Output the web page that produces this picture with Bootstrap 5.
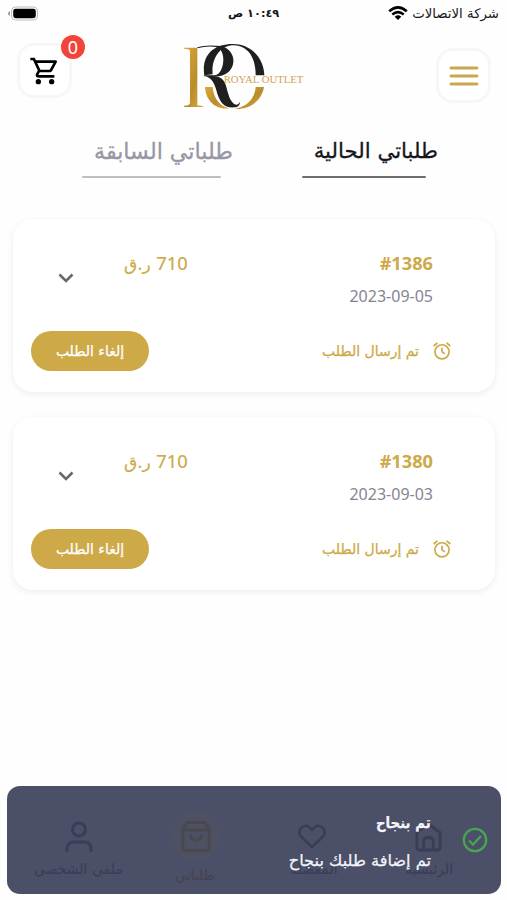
<!DOCTYPE html>
<html lang="ar" dir="rtl">
<head>
<meta charset="utf-8">
<meta name="viewport" content="width=device-width, initial-scale=1">
<title>طلباتي</title>
<link href="https://cdn.jsdelivr.net/npm/bootstrap@5.3.0/dist/css/bootstrap.min.css" rel="stylesheet">
<style>
body{font-family:"DejaVu Sans","Noto Sans",sans-serif;background:#fefefe;color:#16161a;height:900px;overflow:hidden}
.latin{font-family:"Noto Sans","DejaVu Sans",sans-serif}
svg{display:block;flex:none}
.txt{white-space:nowrap;line-height:1}
.status{height:27px;font-size:13.3px;direction:ltr}
.clock{font-size:11.3px;padding-left:80px}
.app-head{height:93px;direction:ltr;padding:8px 16px 0 17px}
.tile{width:55px;height:55px;border:3px solid #f7f7f7;border-radius:17px;background:#fff}
.count{width:24px;height:24px;top:-11px;left:41px;background:#f4433a;font-size:18px;line-height:24px}
.tabs{height:99px;direction:ltr;padding:18px 81px 0 82px}
.tab-item{font-size:22.2px;margin-right:-12px;height:38px;padding-top:2px;-webkit-text-stroke:.3px currentColor}
.tab-item.now{font-size:21.3px}
.tab-line{height:2px;border-radius:1px}
.order{height:173px;border-radius:20px;margin:0 12px 25px 13px;background:#fff;box-shadow:0 2px 7px rgba(0,0,0,.07);direction:ltr;padding:35px 43px 0 18px}
.gold{color:#cda947}
.cancel{width:118px;height:40px;background:#cda947!important;color:#fff!important;font-size:14px;-webkit-text-stroke:.25px #fff}
.price{font-size:17px;margin-left:47px;-webkit-text-stroke:.2px currentColor}
.price .latin{font-size:18.3px}
.order-no{font-size:18.2px}
.date{font-size:16px;color:#858591;margin-top:16px}
.foot{margin-top:27px}
.sent{font-size:14px;margin-right:13px;-webkit-text-stroke:.25px currentColor}
.note{left:7px;top:786px;width:494px;height:108px;border-radius:13px;background:#4b4f68;direction:ltr}
.dock-item{position:absolute;color:#393d56}
.dock-label{font-size:14px}
.spot{width:48px;height:48px;border-radius:17px;background:#4e5163}
.msg{position:absolute;right:70px;color:#f4f4fa;-webkit-text-stroke:.25px currentColor}
</style>
</head>
<body>
<header>
<div class="status d-flex justify-content-between align-items-center px-2">
<svg width="31" height="15" viewBox="0 0 31 15"><rect x="3.5" y="1" width="26" height="13" rx="4" fill="#fff" stroke="#bcbcbc"/><rect x="5.2" y="2.8" width="22.6" height="9.4" rx="2.4" fill="#000"/><path d="M2 5v5Q0 9 0 7.500T2 5" fill="#999"/></svg>
<div class="txt fw-bold clock" dir="rtl">١٠:٤٩ ص</div>
<div class="d-flex align-items-center gap-1"><svg width="20" height="15" viewBox="0 0 20 15" fill="none" stroke="#000" stroke-width="2.5"><path d="M1.200 5.300Q10-2.500 18.800 5.300M4.300 8.500Q10 3.800 15.700 8.500"/><path d="M6.700 10.700Q10 8 13.300 10.700L10 14Z" fill="#000" stroke="none"/></svg><span class="txt" dir="rtl">شركة الاتصالات</span></div>
</div>
<div class="app-head d-flex justify-content-between">
<div class="tile position-relative mt-2 d-flex align-items-center justify-content-center"><svg width="32" height="32" viewBox="0 0 24 24"><path d="M15.550 13c.750 0 1.410-.410 1.750-1.030l3.580-6.490A.996.996 0 0 0 20.010 4H5.210l-.940-2H1v2h2l3.600 7.590-1.350 2.440C4.520 15.370 5.480 17 7 17h12v-2H7l1.100-2h7.450zM6.160 6h12.150l-2.760 5H8.530L6.160 6zM7 18a2 2 0 1 0 0 4 2 2 0 0 0 0-4zm10 0a2 2 0 1 0 0 4 2 2 0 0 0 0-4z"/></svg><span class="count latin position-absolute rounded-circle text-white text-center">0</span></div>
<svg width="140" height="80" viewBox="0 0 420 240" style="margin:1px 18px 0 0">
<defs><linearGradient id="au" x1="0" x2="1" y1="0" y2="1"><stop stop-color="#dca93b"/><stop offset=".55" stop-color="#b98d2b"/><stop offset="1" stop-color="#dfac3c"/></linearGradient></defs>
<path d="M27 35H67V208Q80 209 88 213H27V209Q45 209 45 200V44Q43 38 27 38Z" fill="url(#au)"/>
<path d="M67 34Q92 25 137 30C190 42 188 112 132 121H87V118H120C150 112 155 40 124 33Q96 29 67 37Z" fill="#201f20"/>
<path d="M88 118C78 55 119 23 175 24C229 24 267 68 268 118H242C242 65 220 30 177 28C138 27 108 65 113 115Z" fill="#201f20"/>
<path d="M110 119C151 120 152 146 160 174C168 204 187 216 195 197C195 207 189 214 178 214C146 216 135 197 127 173C119 143 112 127 92 121Z" fill="#201f20"/>
<path d="M90 153H113C116 192 138 211 163 217C119 223 91 189 90 153Z" fill="url(#au)"/>
<path d="M242 153H267C261 190 230 221 178 219C216 213 240 187 242 153Z" fill="url(#au)"/>
<text x="146" y="142" textLength="239" lengthAdjust="spacingAndGlyphs" font-family="Liberation Serif,serif" font-size="30" fill="#cfa354">ROYAL OUTLET</text></svg>
<div class="tile d-flex align-items-center justify-content-center" style="margin-top:13px"><svg width="30" height="22" viewBox="0 0 30 22" stroke="#cda74c" stroke-width="2.800" stroke-linecap="round"><path d="M2 3H28M2 11H28M2 19H28"/></svg></div>
</div>
</header>
<nav class="tabs d-flex justify-content-between">
<div style="width:139px"><div class="tab-item txt" dir="rtl" style="color:#9797a4">طلباتي السابقة</div><div class="tab-line" style="background:#bfbfc1"></div></div>
<div style="width:124px"><div class="tab-item now txt" dir="rtl">طلباتي الحالية</div><div class="tab-line" style="background:#6e6e70"></div></div>
</nav>
<main>
<article class="order">
<div class="d-flex">
<svg class="ms-4" style="margin-top:13px" width="22" height="22" viewBox="0 0 22 22" fill="none" stroke="#66666b" stroke-width="2.500"><path d="M4.500 7.500L11 14L17.500 7.500"/></svg>
<div class="gold txt price" dir="rtl"><span class="latin">710</span> ر.ق</div>
<div class="ms-auto text-end latin" style="padding-right:19px"><div class="gold txt fw-bold order-no">#1386</div><div class="txt date">2023-09-05</div></div>
</div>
<div class="d-flex align-items-center justify-content-between foot">
<button class="btn cancel rounded-pill p-0 txt border-0">إلغاء الطلب</button>
<div class="d-flex align-items-center"><span class="txt gold sent" dir="rtl">تم إرسال الطلب</span><svg width="20" height="20" viewBox="0 0 24 24" fill="none" stroke="#cda947" stroke-width="2"><circle cx="12" cy="13" r="8.500"/><path d="M2 6L6.500 2.200M22 6L17.500 2.200M12 8V13L15.500 15.500"/></svg></div>
</div>
</article>
<article class="order">
<div class="d-flex">
<svg class="ms-4" style="margin-top:13px" width="22" height="22" viewBox="0 0 22 22" fill="none" stroke="#66666b" stroke-width="2.500"><path d="M4.500 7.500L11 14L17.500 7.500"/></svg>
<div class="gold txt price" dir="rtl"><span class="latin">710</span> ر.ق</div>
<div class="ms-auto text-end latin" style="padding-right:19px"><div class="gold txt fw-bold order-no">#1380</div><div class="txt date">2023-09-03</div></div>
</div>
<div class="d-flex align-items-center justify-content-between foot">
<button class="btn cancel rounded-pill p-0 txt border-0">إلغاء الطلب</button>
<div class="d-flex align-items-center"><span class="txt gold sent" dir="rtl">تم إرسال الطلب</span><svg width="20" height="20" viewBox="0 0 24 24" fill="none" stroke="#cda947" stroke-width="2"><circle cx="12" cy="13" r="8.500"/><path d="M2 6L6.500 2.200M22 6L17.500 2.200M12 8V13L15.500 15.500"/></svg></div>
</div>
</article>
</main>
<aside class="note position-absolute">
<div class="dock-item" style="left:55px;top:32px"><svg width="34" height="38" viewBox="0 0 34 38" fill="none" stroke="currentColor" stroke-width="3"><circle cx="17" cy="11.500" r="6.500"/><path d="M5 34V31Q5 24 12 24H22Q29 24 29 31V34"/></svg></div>
<div class="dock-item txt dock-label" dir="rtl" style="left:27px;top:76px">ملفي الشخصي</div>
<div class="dock-item spot d-flex align-items-center justify-content-center" style="left:165px;top:26px;color:#4a484f"><svg width="32" height="35" viewBox="0 0 34 36" fill="none" stroke="currentColor" stroke-width="3.200" stroke-linejoin="round"><path d="M3 10L8 3H26L31 10V29Q31 33 27 33H7Q3 33 3 29ZM3 11H31M11 16Q12 22 17 22T23 16"/></svg></div>
<div class="dock-item txt dock-label" dir="rtl" style="left:168px;top:82px;color:#45434f">طلباتي</div>
<div class="dock-item" style="left:290px;top:37px"><svg width="30" height="28" viewBox="0 0 30 28" fill="none" stroke="currentColor" stroke-width="2.600" stroke-linejoin="round"><path d="M15 24L4.500 14C-1 8 6 0 12 4L15 7L18 4C24 0 31 8 25.500 14Z"/></svg></div>
<div class="dock-item txt dock-label" dir="rtl" style="left:283px;top:76px">المفضلة</div>
<div class="dock-item" style="left:407px;top:36px"><svg width="29" height="31" viewBox="0 0 30 32" fill="none" stroke="currentColor" stroke-width="3" stroke-linejoin="round"><path d="M3 11L15 2L27 11V26Q27 29 24 29H6Q3 29 3 26ZM10 29V20Q10 16 15 16T20 20V29"/></svg></div>
<div class="dock-item txt dock-label" dir="rtl" style="left:398px;top:76px">الرئيسية</div>
<div class="msg txt fw-bold" dir="rtl" style="top:30px;font-size:15.500px;transform:scaleX(.86);transform-origin:right">تم بنجاح</div>
<div class="msg txt" dir="rtl" style="top:67px;font-size:16.200px">تم إضافة طلبك بنجاح</div>
<div class="position-absolute" style="left:455px;top:41px"><svg width="26" height="26" viewBox="0 0 26 26" fill="none" stroke="#47a552" stroke-width="2.300"><circle cx="13" cy="13" r="11.200"/><path d="M7 13.500L11 17.500L19 9"/></svg></div>
</aside>
<script src="https://cdn.jsdelivr.net/npm/bootstrap@5.3.0/dist/js/bootstrap.bundle.min.js"></script>
</body>
</html>
